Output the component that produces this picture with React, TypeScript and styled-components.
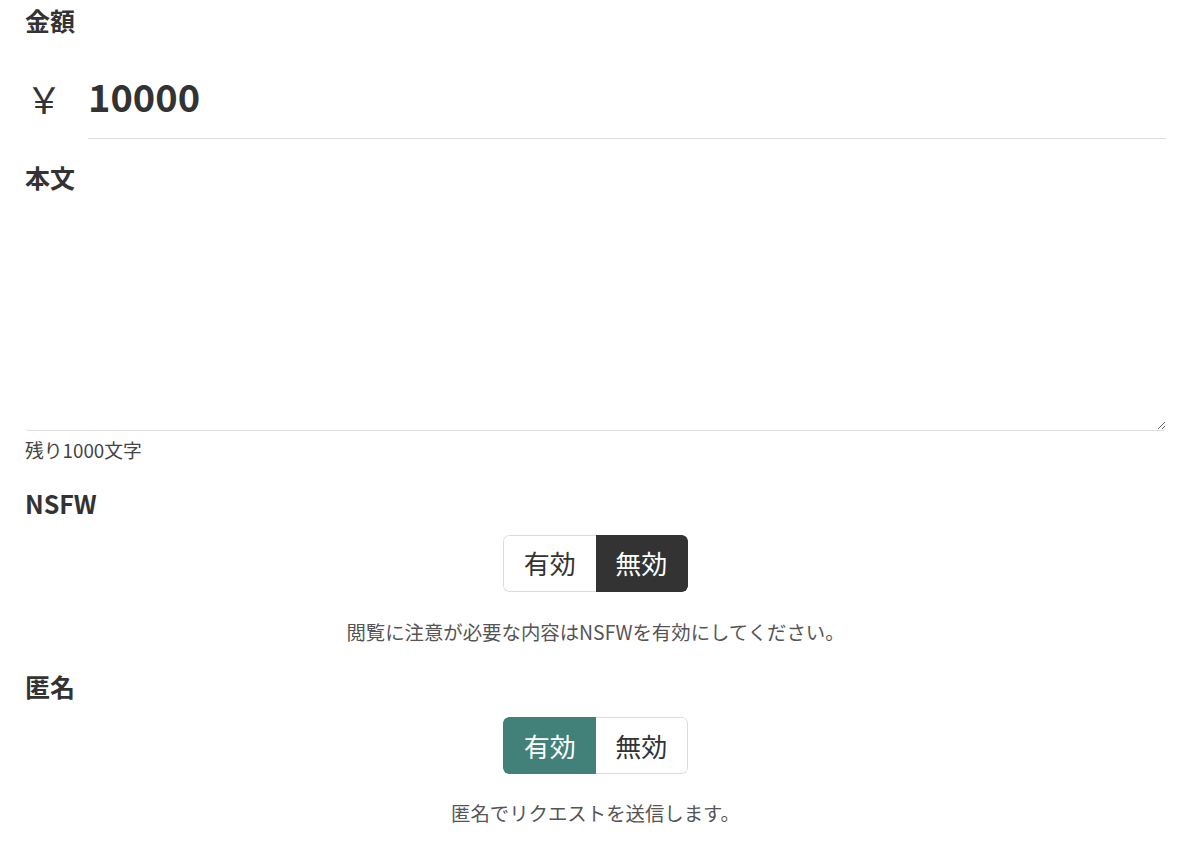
import React, { useState } from "react";
import styled, { createGlobalStyle } from "styled-components";

const Global = createGlobalStyle`
  html, body { margin: 0; padding: 0; background: #fff; }
  body {
    font-family: "Noto Sans CJK JP", "Noto Sans", sans-serif;
    color: #333;
  }
  * { box-sizing: border-box; }
`;

const Form = styled.div`
  width: 1166px;
  padding: 2px 0 0 25px;
  display: flex;
  flex-direction: column;
`;

const Label = styled.div<{ $mt?: number }>`
  font-size: 25px;
  font-weight: 700;
  line-height: 37.5px;
  color: #333;
  margin-top: ${(p) => p.$mt ?? 0}px;
`;

const AmountRow = styled.div`
  display: flex;
  align-items: center;
  margin-top: 22px;
`;

const Currency = styled.span`
  width: 38px;
  text-align: center;
  font-size: 36px;
  line-height: 1;
  color: #333;
  margin-right: 25px;
  margin-top: -4px;
`;

const AmountInput = styled.input`
  flex: 1;
  border: none;
  border-bottom: 1px solid #ddd;
  outline: none;
  padding: 4px 0 12px;
  font-family: inherit;
  font-size: 38px;
  font-weight: 700;
  line-height: 60px;
  height: 77px;
  color: #333;
  background: transparent;
`;

const Body = styled.textarea`
  display: block;
  width: 100%;
  height: 229px;
  margin-top: 6px;
  border: none;
  border-bottom: 1px solid #ddd;
  border-radius: 4px;
  outline: none;
  font-family: inherit;
  font-size: 18px;
  padding: 8px;
  resize: vertical;
  background: transparent;
`;

const Counter = styled.div`
  font-size: 18.8px;
  line-height: 27px;
  color: #444;
  margin-top: 5px;
`;

const ToggleWrap = styled.div<{ $mt: number }>`
  display: flex;
  justify-content: center;
  margin-top: ${(p) => p.$mt}px;
`;

const ToggleGroup = styled.div`
  display: flex;
  border-radius: 6px;
  overflow: hidden;
`;

const ToggleButton = styled.button<{ $active: boolean; $color: string; $side: "l" | "r" }>`
  width: 92.5px;
  height: 57px;
  font-family: inherit;
  font-size: 26px;
  line-height: 36px;
  padding: 0;
  cursor: pointer;
  border: 1px solid ${(p) => (p.$active ? p.$color : "#dcdcdc")};
  ${(p) => (p.$side === "l" ? "border-right: none;" : "border-left: none;")}
  border-radius: ${(p) => (p.$side === "l" ? "6px 0 0 6px" : "0 6px 6px 0")};
  background: ${(p) => (p.$active ? p.$color : "#fff")};
  color: ${(p) => (p.$active ? "#fff" : "#333")};
`;

const Help = styled.div<{ $mt: number }>`
  text-align: center;
  font-size: 19.4px;
  line-height: 28px;
  color: #555;
  margin-top: ${(p) => p.$mt}px;
`;

function Toggle({
  value,
  onChange,
  color,
}: {
  value: boolean;
  onChange: (v: boolean) => void;
  color: string;
}) {
  return (
    <ToggleGroup>
      <ToggleButton $side="l" $active={value} $color={color} onClick={() => onChange(true)}>
        有効
      </ToggleButton>
      <ToggleButton $side="r" $active={!value} $color={color} onClick={() => onChange(false)}>
        無効
      </ToggleButton>
    </ToggleGroup>
  );
}

export default function App() {
  const [nsfw, setNsfw] = useState(false);
  const [anon, setAnon] = useState(true);
  const [text, setText] = useState("");
  return (
    <>
      <Global />
      <Form>
        <Label>金額</Label>
        <AmountRow>
          <Currency>￥</Currency>
          <AmountInput defaultValue="10000" />
        </AmountRow>
        <Label $mt={20}>本文</Label>
        <Body value={text} onChange={(e) => setText(e.target.value)} />
        <Counter>残り{1000 - text.length}文字</Counter>
        <Label $mt={22}>NSFW</Label>
        <ToggleWrap $mt={12}>
          <Toggle value={nsfw} onChange={setNsfw} color="#333333" />
        </ToggleWrap>
        <Help $mt={26}>閲覧に注意が必要な内容はNSFWを有効にしてください。</Help>
        <Label $mt={22}>匿名</Label>
        <ToggleWrap $mt={12}>
          <Toggle value={anon} onChange={setAnon} color="#41817a" />
        </ToggleWrap>
        <Help $mt={25}>匿名でリクエストを送信します。</Help>
      </Form>
    </>
  );
}
